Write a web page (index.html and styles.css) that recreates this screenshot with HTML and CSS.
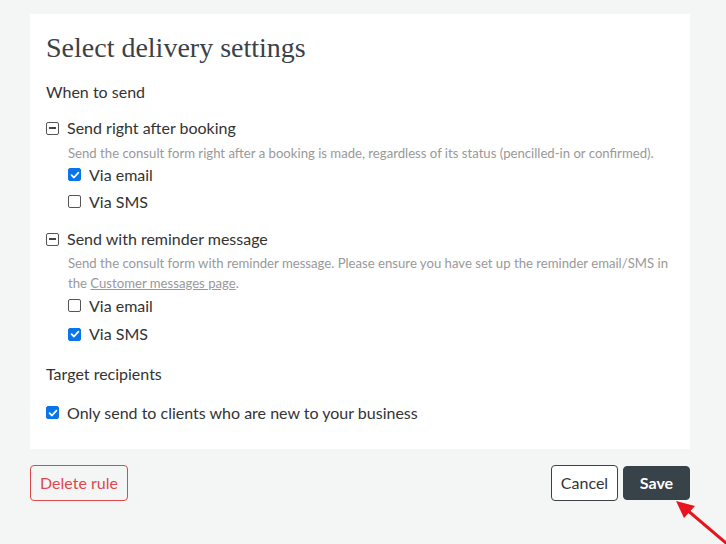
FILE: index.html
```html
<!DOCTYPE html>
<html>
<head>
<meta charset="utf-8">
<link rel="stylesheet" href="styles.css">
</head>
<body>
<div class="page">
  <div class="card">
    <h1 class="title">Select delivery settings</h1>
    <div class="section-label">When to send</div>

    <div class="group">
      <div class="group-head">
        <span class="box minus"><span class="bar"></span></span>
        <span>Send right after booking</span>
      </div>
      <div class="sub">
        <p class="desc">Send the consult form right after a booking is made, regardless of its status (pencilled-in or confirmed).</p>
        <div class="opt"><span class="box checked"><svg viewBox="0 0 12 12" width="12" height="12"><path d="M2.6 6.2 L5 8.5 L9.4 3.6" fill="none" stroke="#fff" stroke-width="1.8" stroke-linecap="round" stroke-linejoin="round"/></svg></span><span>Via email</span></div>
        <div class="opt"><span class="box"></span><span>Via SMS</span></div>
      </div>
    </div>

    <div class="group second">
      <div class="group-head">
        <span class="box minus"><span class="bar"></span></span>
        <span>Send with reminder message</span>
      </div>
      <div class="sub">
        <p class="desc">Send the consult form with reminder message. Please ensure you have set up the reminder email/SMS in the <a class="link" href="#">Customer messages page</a>.</p>
        <div class="opt"><span class="box"></span><span>Via email</span></div>
        <div class="opt tall"><span class="box checked"><svg viewBox="0 0 12 12" width="12" height="12"><path d="M2.6 6.2 L5 8.5 L9.4 3.6" fill="none" stroke="#fff" stroke-width="1.8" stroke-linecap="round" stroke-linejoin="round"/></svg></span><span>Via SMS</span></div>
      </div>
    </div>

    <div class="section-label target">Target recipients</div>
    <div class="opt top"><span class="box checked"><svg viewBox="0 0 12 12" width="12" height="12"><path d="M2.6 6.2 L5 8.5 L9.4 3.6" fill="none" stroke="#fff" stroke-width="1.8" stroke-linecap="round" stroke-linejoin="round"/></svg></span><span>Only send to clients who are new to your business</span></div>
  </div>

  <div class="actions">
    <button class="btn danger">Delete rule</button>
    <div class="right">
      <button class="btn default">Cancel</button>
      <button class="btn primary">Save</button>
    </div>
  </div>

  <svg class="arrow" width="60" height="50" viewBox="0 0 60 50">
    <line x1="56" y1="47" x2="16" y2="13" stroke="#e8141b" stroke-width="3" stroke-linecap="round"/>
    <polygon points="6,5 25,10 14,22" fill="#e8141b"/>
  </svg>
</div>
</body>
</html>
```

FILE: styles.css
```css
* { box-sizing: border-box; }
html, body { margin: 0; padding: 0; }
body {
  background: #f4f6f6;
  font-family: Lato, "Liberation Sans", sans-serif;
  color: #333;
  width: 726px;
  height: 544px;
  overflow: hidden;
}
.page {
  position: relative;
  padding: 14px 36px 0 30px;
  height: 544px;
}
.card {
  background: #fff;
  width: 660px;
  padding: 19px 16px 24px 16px;
  height: 435px;
}
.title {
  font-family: "Liberation Serif", "DejaVu Serif", serif;
  font-weight: normal;
  font-size: 28px;
  color: #3b4146;
  margin: 0;
  line-height: 30px;
}
.section-label {
  font-size: 16px;
  line-height: 20px;
  margin-top: 19px;
  color: #333;
}
.section-label.target { margin-top: 16px; }
.group { margin-top: 16px; }
.group.second { margin-top: 14px; }
.group-head {
  display: flex;
  align-items: center;
  gap: 8px;
  font-size: 16px;
  line-height: 20px;
}
.sub { padding-left: 22px; }
.desc {
  margin: 5px 0 -2px 0;
  font-size: 13.15px;
  line-height: 20px;
  color: #999;
}
.second .desc { margin-top: 4px; margin-bottom: -1px; }
.link { color: #999; text-decoration: underline; }
.opt {
  display: flex;
  align-items: center;
  gap: 8px;
  font-size: 16px;
  line-height: 20px;
  height: 27px;
}
.opt.tall { height: 28px; margin-top: 1px; }
.opt.top { margin-top: 15px; }
.box {
  width: 13px;
  height: 13px;
  border: 1px solid #555;
  border-radius: 2px;
  flex: none;
  display: flex;
  align-items: center;
  justify-content: center;
  background: #fff;
}
.box.checked {
  background: #0a74ea;
  border-color: #0a74ea;
}
.box.checked svg { display: block; margin: -1px; }
.bar { width: 7px; height: 1.5px; background: #444; }
.actions {
  display: flex;
  justify-content: space-between;
  align-items: center;
  margin-top: 16px;
  width: 660px;
}
.right { display: flex; gap: 5px; align-items: center; }
.btn {
  font-family: Lato, "Liberation Sans", sans-serif;
  font-size: 16px;
  height: 36px;
  padding: 0 8px 1px;
  border-radius: 4px;
  cursor: pointer;
}
.btn.danger {
  background: transparent;
  color: #e0474d;
  border: 1px solid #e0474d;
  width: 98px;
}
.btn.default {
  background: #fff;
  color: #333;
  border: 1px solid #3b4146;
  width: 67px;
}
.btn.primary {
  background: #374249;
  color: #fff;
  border: 1px solid #374249;
  width: 67px;
  height: 34px;
  font-weight: bold;
}
.arrow {
  position: absolute;
  left: 670px;
  top: 496px;
}
```
